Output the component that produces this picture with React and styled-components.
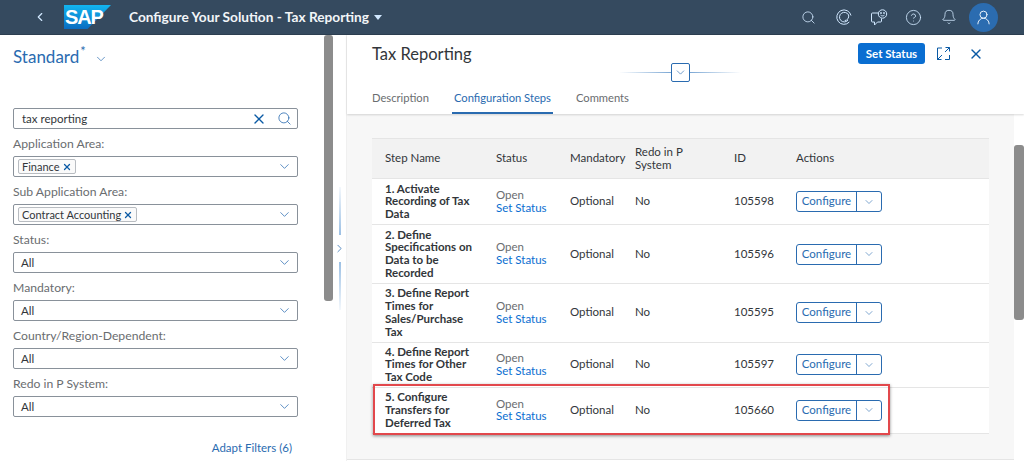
import React from "react";
import styled, { createGlobalStyle } from "styled-components";
import { ChevronLeft, ChevronRight, ChevronDown, Search, X, HelpCircle, Bell, UserRound } from "lucide-react";

const Global = createGlobalStyle`
  html, body { margin: 0; padding: 0; height: 100%; overflow: hidden; background: #fff; }
  body { font-family: Lato, "Noto Sans", sans-serif; font-size: 11.5px; color: #32363a; }
  * { box-sizing: border-box; }
`;

const Page = styled.div`
  width: 1024px;
  height: 461px;
  display: flex;
  flex-direction: column;
  position: relative;
  overflow: hidden;
`;

/* shell bar */
const Shell = styled.header`
  height: 35px;
  flex: none;
  background: #354a5f;
  border-bottom: 1px solid #2c3e50;
  display: flex;
  align-items: center;
  padding-left: 33px;
  color: #fff;
`;
const BackBtn = styled.div`
  width: 14px;
  display: flex;
  color: #d1e8ff;
  margin-right: 17px;
`;
const Logo = styled.div`
  position: relative;
  width: 47px;
  height: 24px;
  margin-right: 18px;
  svg { display: block; }
`;
const LogoText = styled.span`
  position: absolute;
  left: 1px;
  top: 3px;
  font: 700 20px/19px "Liberation Sans", sans-serif;
  letter-spacing: -1.2px;
  color: #fff;
`;
const ShellTitle = styled.div`
  font-size: 13.7px;
  font-weight: 700;
  color: #f2f5f8;
  margin-top: -2px;
`;
const Caret = styled.span`
  width: 0;
  height: 0;
  margin-left: 5px;
  border-left: 4px solid transparent;
  border-right: 4px solid transparent;
  border-top: 5px solid #d1e8ff;
`;
const ShellIcons = styled.div`
  margin-left: auto;
  display: flex;
  align-items: center;
  padding-right: 23px;
  color: #d1e8ff;
  svg { display: block; }
`;
const ShellIcon = styled.span`
  width: 35px;
  display: flex;
  justify-content: center;
`;
const Avatar = styled.div`
  width: 29px;
  height: 29px;
  border-radius: 50%;
  background: #2b6cb0;
  color: #e8f2fb;
  display: flex;
  align-items: center;
  justify-content: center;
`;

const Body = styled.div`
  flex: 1;
  display: flex;
  min-height: 0;
`;

/* filter side */
const FilterPane = styled.aside`
  width: 324px;
  flex: none;
  padding: 11px 26px 0 13px;
  display: flex;
  flex-direction: column;
`;
const VariantRow = styled.div`
  display: flex;
  align-items: center;
  height: 20px;
  color: #2a6bb0;
  font-size: 17px;
  margin-bottom: 42px;
`;
const Star = styled.sup`
  font-size: 13px;
  line-height: 1;
  align-self: flex-start;
  margin-top: -1px;
  margin-left: 1px;
`;
const VariantChevron = styled.span`
  display: flex;
  margin-left: 8px;
  margin-top: 5px;
`;
const FieldBox = styled.div`
  height: 21px;
  border: 1px solid #89919a;
  border-radius: 2px;
  background: #fff;
  display: flex;
  align-items: center;
  padding: 0 5px 0 ${(p) => (p.$tokens ? "4px" : "7px")};
  color: #32363a;
`;
const SearchBox = styled(FieldBox)`
  padding-left: 8px;
`;
const BoxRight = styled.span`
  margin-left: auto;
  display: flex;
  align-items: center;
  gap: 10px;
  color: #0a5aa5;
  svg { display: block; }
`;
const FilterLabel = styled.div`
  height: 27px;
  padding-top: 7px;
  line-height: 15px;
  font-size: 12.2px;
  color: #6a6d70;
`;
const Token = styled.span`
  display: inline-flex;
  align-items: center;
  gap: 2px;
  height: 15px;
  padding: 0 3px;
  background: #fafafa;
  border: 1px solid #b8bcc1;
  border-radius: 2px;
  font-size: 11px;
  color: #32363a;
`;
const TokenX = styled.span`
  display: flex;
  color: #0a5aa5;
`;
const AdaptLink = styled.div`
  margin-top: 24px;
  text-align: right;
  color: #2a6bb0;
  padding-right: 6px;
`;

const ScrollTrack = styled.div`
  width: ${(p) => p.$w}px;
  flex: none;
  padding-top: ${(p) => p.$top}px;
`;
const Thumb = styled.div`
  height: ${(p) => p.$h}px;
  background: #8c8c8c;
  border-radius: 3px;
`;

/* splitter between panes */
const Splitter = styled.div`
  width: 13px;
  flex: none;
  display: flex;
  flex-direction: column;
  align-items: center;
  padding-top: 152px;
`;
const SplitLine = styled.div`
  width: 2px;
  height: 48px;
  background: ${(p) =>
    p.$up
      ? "linear-gradient(to top, #9cc0e4, #f4f8fc)"
      : "linear-gradient(to bottom, #9cc0e4, #f4f8fc)"};
`;
const SplitChevron = styled.div`
  display: flex;
  color: #2a6bb0;
  height: 27px;
  align-items: center;
`;

/* detail side */
const Detail = styled.main`
  flex: 1;
  min-width: 0;
  display: flex;
  flex-direction: column;
  border-left: 1px solid #f0f0f0;
`;
const DetailHead = styled.div`
  position: relative;
  height: 79px;
  flex: none;
  background: #fff;
  padding: 0 0 0 25px;
  box-shadow: 0 1px 2px rgba(0, 0, 0, 0.15);
  z-index: 1;
  display: flex;
  flex-direction: column;
`;
const TitleRow = styled.div`
  display: flex;
  align-items: center;
  height: 37px;
  padding-right: 40px;
`;
const DetailTitle = styled.h1`
  margin: 1px 0 0;
  font-size: 16.5px;
  font-weight: 400;
  color: #32363a;
`;
const PrimaryBtn = styled.button`
  margin-left: auto;
  height: 21px;
  width: 67px;
  padding: 0;
  border: 0;
  border-radius: 3px;
  background: #0a6ed1;
  color: #fff;
  font: 700 11.5px Lato, sans-serif;
`;
const HeadIcon = styled.span`
  display: flex;
  margin-left: ${(p) => p.$ml}px;
  color: #0a5aa5;
`;
const Collapse = styled.div`
  position: absolute;
  left: 272px;
  top: 28px;
  width: 122px;
  height: 18px;
  display: flex;
  align-items: center;
  justify-content: center;
`;
const CollapseLine = styled.div`
  flex: 1;
  height: 1px;
  background: linear-gradient(${(p) => (p.$right ? "to left" : "to right")}, #fff, #7ba7d4);
`;
const CollapseBtn = styled.div`
  width: 19px;
  height: 19px;
  flex: none;
  background: #fff;
  border: 1px solid #2a6bb0;
  border-radius: 2px;
  color: #2a6bb0;
  display: flex;
  align-items: center;
  justify-content: center;
`;
const Tabs = styled.nav`
  display: flex;
  gap: 25px;
  margin-top: auto;
`;
const Tab = styled.div`
  height: 41px;
  padding: 18px 2px 0;
  margin: 0 -2px;
  font-size: 11.2px;
  color: ${(p) => (p.$active ? "#2a6bb0" : "#6a6d70")};
  border-bottom: ${(p) => (p.$active ? "2px solid #2a6bb0" : "2px solid transparent")};
`;

const DetailBody = styled.div`
  flex: 1;
  min-height: 0;
  display: flex;
`;
const Content = styled.div`
  flex: 1;
  background: #f7f7f7;
  padding: 24px 25px 0 25px;
  border-bottom: 1px solid #e5e5e5;
  margin-bottom: 1px;
`;
const Table = styled.table`
  width: 100%;
  border-collapse: collapse;
  table-layout: fixed;
  background: #fff;
`;
const Th = styled.th`
  height: 40px;
  width: ${(p) => (p.$w ? p.$w + "px" : "auto")};
  padding: 0 0 0 ${(p) => p.$pl || 0}px;
  background: #f2f2f2;
  border-top: 1px solid #e5e5e5;
  border-bottom: 1px solid #e5e5e5;
  text-align: left;
  line-height: 12.7px;
  font-weight: 400;
  color: #32363a;
`;
const Tr = styled.tr`
  border-bottom: 1px solid #e5e5e5;
`;
const Td = styled.td`
  padding: ${(p) => (p.$tight ? 3 : 3.5)}px 0 ${(p) => (p.$tight ? 3 : 3.5)}px ${(p) => p.$pl || 0}px;
  line-height: 12.7px;
  color: #32363a;
  vertical-align: middle;
`;
const StepName = styled(Td)`
  font-weight: 700;
  white-space: pre-line;
`;
const Open = styled.div`
  color: #6a6d70;
`;
const SetStatus = styled.div`
  color: #0a6ed1;
`;
const SplitBtn = styled.div`
  display: inline-flex;
  vertical-align: middle;
  height: 21px;
  border: 1px solid #2a6bb0;
  border-radius: 3px;
  background: #fff;
  overflow: hidden;
`;
const SplitMain = styled.span`
  width: 60px;
  text-align: center;
  line-height: 18px;
  color: #2a6bb0;
  border-right: 1px solid #2a6bb0;
`;
const SplitArrow = styled.span`
  width: 24px;
  display: flex;
  align-items: center;
  justify-content: center;
  color: #2a6bb0;
`;
const Highlight = styled.div`
  position: absolute;
  left: 373px;
  top: 384px;
  width: 517px;
  height: 51px;
  border: 2px solid #e2484c;
  box-shadow: 0 1px 3px rgba(0, 0, 0, 0.45);
  pointer-events: none;
`;

const steps = [
  { name: "1. Activate\nRecording of Tax\nData", id: "105598" },
  { name: "2. Define\nSpecifications on\nData to be\nRecorded", id: "105596" },
  { name: "3. Define Report\nTimes for\nSales/Purchase\nTax", id: "105595" },
  { name: "4. Define Report\nTimes for Other\nTax Code", id: "105597", tight: true },
  { name: "5. Configure\nTransfers for\nDeferred Tax", id: "105660" },
];

const filters = ["Status:", "Mandatory:", "Country/Region-Dependent:", "Redo in P System:"];

const SapLogo = () => (
  <Logo>
    <svg width="47" height="24" viewBox="0 0 47 24">
      <defs>
        <linearGradient id="sapg" x1="0" y1="0" x2="0" y2="1">
          <stop offset="0" stopColor="#12b5f0" />
          <stop offset="1" stopColor="#0a6cc0" />
        </linearGradient>
      </defs>
      <polygon points="0,0 47,0 23.5,24 0,24" fill="url(#sapg)" />
    </svg>
    <LogoText>SAP</LogoText>
  </Logo>
);

const FieldChevron = () => (
  <BoxRight>
    <ChevronDown size={15} strokeWidth={1.2} color="#2a6bb0" />
  </BoxRight>
);

// concentric ring mark in the shell bar
const RingIcon = () => (
  <svg width="16" height="16" viewBox="0 0 16 16" fill="none" stroke="currentColor" strokeWidth="1">
    <path d="M13.3 13A7.2 7.2 0 1 1 15 6.5" />
    <path d="M12 11.2A4.8 4.8 0 1 1 12.6 6" />
    <path d="M12.6 6c.6 2.6-.9 5.4-3.9 5.6" />
  </svg>
);

const FeedbackIcon = () => (
  <svg width="18" height="18" viewBox="0 0 18 18" fill="none" stroke="currentColor" strokeWidth="1">
    <path d="M8.5 5H2.5a1 1 0 0 0-1 1v7a1 1 0 0 0 1 1h2v3l3-3h3a1 1 0 0 0 1-1v-2.500" />
    <circle cx="12.500" cy="6" r="4.200" />
    <circle cx="11" cy="5" r=".5" fill="currentColor" />
    <circle cx="14" cy="5" r=".5" fill="currentColor" />
    <path d="M10.600 7.200c1 .9 2.800.9 3.800 0" />
  </svg>
);

const ExpandIcon = () => (
  <svg width="15" height="15" viewBox="0 0 15 15" fill="none" stroke="currentColor" strokeWidth="1">
    <path d="M6 2H1.500v11.500H5M9 13.500h4.500V9M9.500 1.500h4v4M13.500 1.500 9 6M1.500 13.500 6 9M1.500 9.500v4h4" />
  </svg>
);

export default function App() {
  return (
    <Page>
      <Global />
      <Shell>
        <BackBtn>
          <ChevronLeft size={16} strokeWidth={2} />
        </BackBtn>
        <SapLogo />
        <ShellTitle>Configure Your Solution - Tax Reporting</ShellTitle>
        <Caret />
        <ShellIcons>
          <ShellIcon><Search size={15} strokeWidth={1.3} /></ShellIcon>
          <ShellIcon><RingIcon /></ShellIcon>
          <ShellIcon><FeedbackIcon /></ShellIcon>
          <ShellIcon><HelpCircle size={17} strokeWidth={1.2} /></ShellIcon>
          <ShellIcon><Bell size={16} strokeWidth={1.2} /></ShellIcon>
          <ShellIcon>
            <Avatar>
              <UserRound size={17} strokeWidth={1.4} />
            </Avatar>
          </ShellIcon>
        </ShellIcons>
      </Shell>
      <Body>
        <FilterPane>
          <VariantRow>
            Standard<Star>*</Star>
            <VariantChevron>
              <ChevronDown size={14} strokeWidth={1.2} />
            </VariantChevron>
          </VariantRow>
          <SearchBox>
            tax reporting
            <BoxRight>
              <X size={16} strokeWidth={2} />
              <Search size={15} strokeWidth={1.3} color="#2a6bb0" />
            </BoxRight>
          </SearchBox>
          <FilterLabel>Application Area:</FilterLabel>
          <FieldBox $tokens>
            <Token>
              Finance
              <TokenX>
                <X size={10} strokeWidth={3} />
              </TokenX>
            </Token>
            <FieldChevron />
          </FieldBox>
          <FilterLabel>Sub Application Area:</FilterLabel>
          <FieldBox $tokens>
            <Token>
              Contract Accounting
              <TokenX>
                <X size={10} strokeWidth={3} />
              </TokenX>
            </Token>
            <FieldChevron />
          </FieldBox>
          {filters.map((label) => (
            <React.Fragment key={label}>
              <FilterLabel>{label}</FilterLabel>
              <FieldBox>
                All
                <FieldChevron />
              </FieldBox>
            </React.Fragment>
          ))}
          <AdaptLink>Adapt Filters (6)</AdaptLink>
        </FilterPane>
        <ScrollTrack $w={9} $top={0}>
          <Thumb $h={266} />
        </ScrollTrack>
        <Splitter>
          <SplitLine $up />
          <SplitChevron>
            <ChevronRight size={13} strokeWidth={1.4} />
          </SplitChevron>
          <SplitLine />
        </Splitter>
        <Detail>
          <DetailHead>
            <TitleRow>
              <DetailTitle>Tax Reporting</DetailTitle>
              <PrimaryBtn>Set Status</PrimaryBtn>
              <HeadIcon $ml={11}>
                <ExpandIcon />
              </HeadIcon>
              <HeadIcon $ml={17}>
                <X size={16} strokeWidth={2} />
              </HeadIcon>
            </TitleRow>
            <Collapse>
              <CollapseLine />
              <CollapseBtn>
                <ChevronDown size={13} strokeWidth={1.2} />
              </CollapseBtn>
              <CollapseLine $right />
            </Collapse>
            <Tabs>
              <Tab>Description</Tab>
              <Tab $active>Configuration Steps</Tab>
              <Tab>Comments</Tab>
            </Tabs>
          </DetailHead>
          <DetailBody>
            <Content>
              <Table>
                <thead>
                  <tr>
                    <Th $w={124} $pl={13}>Step Name</Th>
                    <Th $w={74}>Status</Th>
                    <Th $w={65}>Mandatory</Th>
                    <Th $w={99}>
                      Redo in P
                      <br />
                      System
                    </Th>
                    <Th $w={62}>ID</Th>
                    <Th>Actions</Th>
                  </tr>
                </thead>
                <tbody>
                  {steps.map((s) => (
                    <Tr key={s.id}>
                      <StepName $pl={13} $tight={s.tight}>{s.name}</StepName>
                      <Td $tight={s.tight}>
                        <Open>Open</Open>
                        <SetStatus>Set Status</SetStatus>
                      </Td>
                      <Td $tight={s.tight}>Optional</Td>
                      <Td $tight={s.tight}>No</Td>
                      <Td $tight={s.tight}>{s.id}</Td>
                      <Td $tight={s.tight}>
                        <SplitBtn>
                          <SplitMain>Configure</SplitMain>
                          <SplitArrow>
                            <ChevronDown size={12} strokeWidth={1.2} />
                          </SplitArrow>
                        </SplitBtn>
                      </Td>
                    </Tr>
                  ))}
                </tbody>
              </Table>
            </Content>
            <ScrollTrack $w={10} $top={31}>
              <Thumb $h={175} />
            </ScrollTrack>
          </DetailBody>
        </Detail>
      </Body>
      <Highlight />
    </Page>
  );
}
